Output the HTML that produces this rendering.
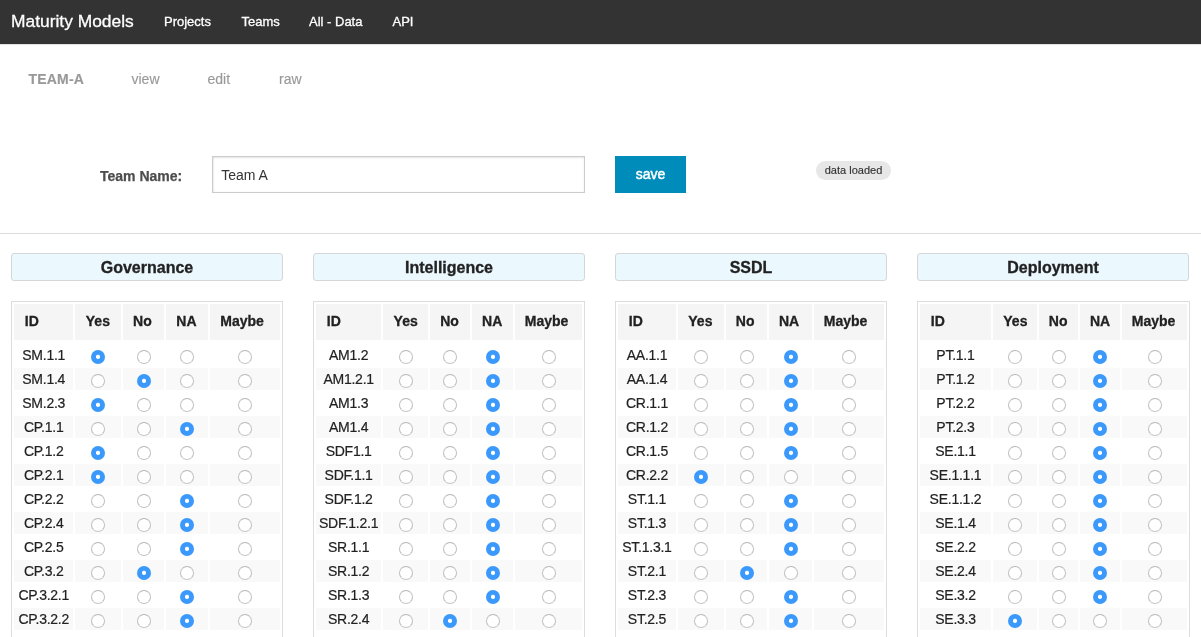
<!DOCTYPE html><html><head><meta charset="utf-8"><title>Maturity Models</title><style>
*{margin:0;padding:0;box-sizing:border-box}
html,body{width:1201px;height:637px;overflow:hidden;background:#fff}
body{font-family:"Liberation Sans",sans-serif;color:#222;position:relative;font-kerning:normal;text-rendering:optimizeLegibility}
.abs{position:absolute;white-space:nowrap}
.nav{position:absolute;left:0;top:0;width:1201px;height:44px;background:#333;box-shadow:0 1px 0 #e2e2e2,0 2px 0 #fcfcfc}
.brand{left:11px;top:6px;font-size:17.4px;line-height:30px;color:#fff;-webkit-text-stroke:0.3px #fff}
.nl{top:10px;font-size:13px;line-height:24px;color:#fff;-webkit-text-stroke:0.3px #fff}
.sub{top:68.5px;font-size:14px;line-height:20px;color:#999;-webkit-text-stroke:0.15px #999}
.lbl{left:100px;top:166px;font-size:14px;line-height:20px;font-weight:bold;color:#4d4d4d;-webkit-text-stroke:0.25px #4d4d4d}
.inp{left:212.3px;top:156px;width:372.4px;height:37px;border:1px solid #ccc;box-shadow:inset 0 1px 2px rgba(0,0,0,.1),inset 1px 0 2px rgba(0,0,0,.06)}
.inpt{left:221.2px;top:165px;font-size:14px;line-height:20px;color:#333}
.btn{left:615px;top:156px;width:71px;height:37px;background:#008cba;color:#fff;font-size:14px;font-weight:normal;-webkit-text-stroke:0.45px #fff;text-align:center;line-height:36px}
.badge{left:816px;top:161px;width:75px;height:19px;border-radius:10px;background:#e7e7e7;color:#333;font-size:11px;line-height:19px;text-align:center;-webkit-text-stroke:0.15px #333}
.hr{left:0;top:233px;width:1201px;height:1px;background:#ddd}
.panel{border:1px solid #d6d6d6;border-radius:3px;background:#ebf8fe;font-size:16px;font-weight:bold;text-align:center;color:#222;-webkit-text-stroke:0.3px #222}
.tbl{border:1px solid #ddd;background:#fff;height:400px}
.th{background:#f5f5f5;font-size:14px;font-weight:bold;color:#222;text-align:center;-webkit-text-stroke:0.3px #222}
.td{font-size:14px;color:#222;text-align:center;-webkit-text-stroke:0.2px #222;letter-spacing:-0.25px;text-indent:0.25px}
.alt{background:#f9f9f9}
.r{position:absolute;width:14px;height:14px;border-radius:50%;border:1px solid;border-color:#b6b6b6 #bfbfbf #c6c6c6;background:#fff}
.r.c{border:none;background:radial-gradient(circle at 7px 6.8px,#fff 0,#fff 1.7px,#3b99fc 2.5px)}
</style></head><body>
<div id="w" style="position:absolute;left:0;top:0;width:1201px;height:637px;will-change:transform">
<div class="nav"></div>
<div class="abs brand">Maturity Models</div>
<div class="abs nl" style="left:164px">Projects</div>
<div class="abs nl" style="left:241.5px">Teams</div>
<div class="abs nl" style="left:309px">All - Data</div>
<div class="abs nl" style="left:392.5px">API</div>
<div class="abs sub" style="left:28.5px;font-weight:bold;letter-spacing:0.2px">TEAM-A</div>
<div class="abs sub" style="left:131.5px">view</div>
<div class="abs sub" style="left:207.5px">edit</div>
<div class="abs sub" style="left:279px">raw</div>
<div class="abs lbl">Team Name:</div>
<div class="abs inp"></div>
<div class="abs inpt">Team A</div>
<div class="abs btn">save</div>
<div class="abs badge">data loaded</div>
<div class="abs hr"></div>
<div class="abs panel" style="left:11px;top:253.2px;width:272px;height:27.4px;line-height:27.4px">Governance</div>
<div class="abs tbl" style="left:11px;top:301.3px;width:272px"></div>
<div class="abs th" style="left:14px;top:304px;width:59.2px;height:36px;line-height:34px;text-align:left;padding-left:10.8px;">ID</div>
<div class="abs th" style="left:75.2px;top:304px;width:45.8px;height:36px;line-height:34px;text-align:left;padding-left:10.6px;">Yes</div>
<div class="abs th" style="left:123px;top:304px;width:41.2px;height:36px;line-height:34px;text-align:left;padding-left:10.1px;">No</div>
<div class="abs th" style="left:166.2px;top:304px;width:42px;height:36px;line-height:34px;text-align:left;padding-left:10.1px;">NA</div>
<div class="abs th" style="left:210.2px;top:304px;width:69.8px;height:36px;line-height:34px;text-align:left;padding-left:10.1px;">Maybe</div>
<div class="abs td" style="left:14px;top:344px;width:59.2px;height:22px;line-height:22px">SM.1.1</div>
<span class="r c" style="left:91px;top:350px"></span>
<span class="r" style="left:137px;top:350px"></span>
<span class="r" style="left:180px;top:350px"></span>
<span class="r" style="left:238px;top:350px"></span>
<div class="abs td alt" style="left:14px;top:368px;width:59.2px;height:22px;line-height:22px">SM.1.4</div>
<div class="abs alt" style="left:75.2px;top:368px;width:45.8px;height:22px"></div>
<span class="r" style="left:91px;top:374px"></span>
<div class="abs alt" style="left:123px;top:368px;width:41.2px;height:22px"></div>
<span class="r c" style="left:137px;top:374px"></span>
<div class="abs alt" style="left:166.2px;top:368px;width:42px;height:22px"></div>
<span class="r" style="left:180px;top:374px"></span>
<div class="abs alt" style="left:210.2px;top:368px;width:69.8px;height:22px"></div>
<span class="r" style="left:238px;top:374px"></span>
<div class="abs td" style="left:14px;top:392px;width:59.2px;height:22px;line-height:22px">SM.2.3</div>
<span class="r c" style="left:91px;top:398px"></span>
<span class="r" style="left:137px;top:398px"></span>
<span class="r" style="left:180px;top:398px"></span>
<span class="r" style="left:238px;top:398px"></span>
<div class="abs td alt" style="left:14px;top:416px;width:59.2px;height:22px;line-height:22px">CP.1.1</div>
<div class="abs alt" style="left:75.2px;top:416px;width:45.8px;height:22px"></div>
<span class="r" style="left:91px;top:422px"></span>
<div class="abs alt" style="left:123px;top:416px;width:41.2px;height:22px"></div>
<span class="r" style="left:137px;top:422px"></span>
<div class="abs alt" style="left:166.2px;top:416px;width:42px;height:22px"></div>
<span class="r c" style="left:180px;top:422px"></span>
<div class="abs alt" style="left:210.2px;top:416px;width:69.8px;height:22px"></div>
<span class="r" style="left:238px;top:422px"></span>
<div class="abs td" style="left:14px;top:440px;width:59.2px;height:22px;line-height:22px">CP.1.2</div>
<span class="r c" style="left:91px;top:446px"></span>
<span class="r" style="left:137px;top:446px"></span>
<span class="r" style="left:180px;top:446px"></span>
<span class="r" style="left:238px;top:446px"></span>
<div class="abs td alt" style="left:14px;top:464px;width:59.2px;height:22px;line-height:22px">CP.2.1</div>
<div class="abs alt" style="left:75.2px;top:464px;width:45.8px;height:22px"></div>
<span class="r c" style="left:91px;top:470px"></span>
<div class="abs alt" style="left:123px;top:464px;width:41.2px;height:22px"></div>
<span class="r" style="left:137px;top:470px"></span>
<div class="abs alt" style="left:166.2px;top:464px;width:42px;height:22px"></div>
<span class="r" style="left:180px;top:470px"></span>
<div class="abs alt" style="left:210.2px;top:464px;width:69.8px;height:22px"></div>
<span class="r" style="left:238px;top:470px"></span>
<div class="abs td" style="left:14px;top:488px;width:59.2px;height:22px;line-height:22px">CP.2.2</div>
<span class="r" style="left:91px;top:494px"></span>
<span class="r" style="left:137px;top:494px"></span>
<span class="r c" style="left:180px;top:494px"></span>
<span class="r" style="left:238px;top:494px"></span>
<div class="abs td alt" style="left:14px;top:512px;width:59.2px;height:22px;line-height:22px">CP.2.4</div>
<div class="abs alt" style="left:75.2px;top:512px;width:45.8px;height:22px"></div>
<span class="r" style="left:91px;top:518px"></span>
<div class="abs alt" style="left:123px;top:512px;width:41.2px;height:22px"></div>
<span class="r" style="left:137px;top:518px"></span>
<div class="abs alt" style="left:166.2px;top:512px;width:42px;height:22px"></div>
<span class="r c" style="left:180px;top:518px"></span>
<div class="abs alt" style="left:210.2px;top:512px;width:69.8px;height:22px"></div>
<span class="r" style="left:238px;top:518px"></span>
<div class="abs td" style="left:14px;top:536px;width:59.2px;height:22px;line-height:22px">CP.2.5</div>
<span class="r" style="left:91px;top:542px"></span>
<span class="r" style="left:137px;top:542px"></span>
<span class="r c" style="left:180px;top:542px"></span>
<span class="r" style="left:238px;top:542px"></span>
<div class="abs td alt" style="left:14px;top:560px;width:59.2px;height:22px;line-height:22px">CP.3.2</div>
<div class="abs alt" style="left:75.2px;top:560px;width:45.8px;height:22px"></div>
<span class="r" style="left:91px;top:566px"></span>
<div class="abs alt" style="left:123px;top:560px;width:41.2px;height:22px"></div>
<span class="r c" style="left:137px;top:566px"></span>
<div class="abs alt" style="left:166.2px;top:560px;width:42px;height:22px"></div>
<span class="r" style="left:180px;top:566px"></span>
<div class="abs alt" style="left:210.2px;top:560px;width:69.8px;height:22px"></div>
<span class="r" style="left:238px;top:566px"></span>
<div class="abs td" style="left:14px;top:584px;width:59.2px;height:22px;line-height:22px">CP.3.2.1</div>
<span class="r" style="left:91px;top:590px"></span>
<span class="r" style="left:137px;top:590px"></span>
<span class="r c" style="left:180px;top:590px"></span>
<span class="r" style="left:238px;top:590px"></span>
<div class="abs td alt" style="left:14px;top:608px;width:59.2px;height:22px;line-height:22px">CP.3.2.2</div>
<div class="abs alt" style="left:75.2px;top:608px;width:45.8px;height:22px"></div>
<span class="r" style="left:91px;top:614px"></span>
<div class="abs alt" style="left:123px;top:608px;width:41.2px;height:22px"></div>
<span class="r" style="left:137px;top:614px"></span>
<div class="abs alt" style="left:166.2px;top:608px;width:42px;height:22px"></div>
<span class="r c" style="left:180px;top:614px"></span>
<div class="abs alt" style="left:210.2px;top:608px;width:69.8px;height:22px"></div>
<span class="r" style="left:238px;top:614px"></span>
<div class="abs panel" style="left:313px;top:253.2px;width:272px;height:27.4px;line-height:27.4px">Intelligence</div>
<div class="abs tbl" style="left:313px;top:301.3px;width:272px"></div>
<div class="abs th" style="left:316px;top:304px;width:65px;height:36px;line-height:34px;text-align:left;padding-left:10.8px;">ID</div>
<div class="abs th" style="left:383px;top:304px;width:45.1px;height:36px;line-height:34px;text-align:left;padding-left:10.6px;">Yes</div>
<div class="abs th" style="left:430.1px;top:304px;width:39.9px;height:36px;line-height:34px;text-align:left;padding-left:10.1px;">No</div>
<div class="abs th" style="left:472px;top:304px;width:40.7px;height:36px;line-height:34px;text-align:left;padding-left:10.1px;">NA</div>
<div class="abs th" style="left:514.7px;top:304px;width:67.3px;height:36px;line-height:34px;text-align:left;padding-left:10.1px;">Maybe</div>
<div class="abs td" style="left:316px;top:344px;width:65px;height:22px;line-height:22px">AM1.2</div>
<span class="r" style="left:399px;top:350px"></span>
<span class="r" style="left:443px;top:350px"></span>
<span class="r c" style="left:486px;top:350px"></span>
<span class="r" style="left:542px;top:350px"></span>
<div class="abs td alt" style="left:316px;top:368px;width:65px;height:22px;line-height:22px">AM1.2.1</div>
<div class="abs alt" style="left:383px;top:368px;width:45.1px;height:22px"></div>
<span class="r" style="left:399px;top:374px"></span>
<div class="abs alt" style="left:430.1px;top:368px;width:39.9px;height:22px"></div>
<span class="r" style="left:443px;top:374px"></span>
<div class="abs alt" style="left:472px;top:368px;width:40.7px;height:22px"></div>
<span class="r c" style="left:486px;top:374px"></span>
<div class="abs alt" style="left:514.7px;top:368px;width:67.3px;height:22px"></div>
<span class="r" style="left:542px;top:374px"></span>
<div class="abs td" style="left:316px;top:392px;width:65px;height:22px;line-height:22px">AM1.3</div>
<span class="r" style="left:399px;top:398px"></span>
<span class="r" style="left:443px;top:398px"></span>
<span class="r c" style="left:486px;top:398px"></span>
<span class="r" style="left:542px;top:398px"></span>
<div class="abs td alt" style="left:316px;top:416px;width:65px;height:22px;line-height:22px">AM1.4</div>
<div class="abs alt" style="left:383px;top:416px;width:45.1px;height:22px"></div>
<span class="r" style="left:399px;top:422px"></span>
<div class="abs alt" style="left:430.1px;top:416px;width:39.9px;height:22px"></div>
<span class="r" style="left:443px;top:422px"></span>
<div class="abs alt" style="left:472px;top:416px;width:40.7px;height:22px"></div>
<span class="r c" style="left:486px;top:422px"></span>
<div class="abs alt" style="left:514.7px;top:416px;width:67.3px;height:22px"></div>
<span class="r" style="left:542px;top:422px"></span>
<div class="abs td" style="left:316px;top:440px;width:65px;height:22px;line-height:22px">SDF1.1</div>
<span class="r" style="left:399px;top:446px"></span>
<span class="r" style="left:443px;top:446px"></span>
<span class="r c" style="left:486px;top:446px"></span>
<span class="r" style="left:542px;top:446px"></span>
<div class="abs td alt" style="left:316px;top:464px;width:65px;height:22px;line-height:22px">SDF.1.1</div>
<div class="abs alt" style="left:383px;top:464px;width:45.1px;height:22px"></div>
<span class="r" style="left:399px;top:470px"></span>
<div class="abs alt" style="left:430.1px;top:464px;width:39.9px;height:22px"></div>
<span class="r" style="left:443px;top:470px"></span>
<div class="abs alt" style="left:472px;top:464px;width:40.7px;height:22px"></div>
<span class="r c" style="left:486px;top:470px"></span>
<div class="abs alt" style="left:514.7px;top:464px;width:67.3px;height:22px"></div>
<span class="r" style="left:542px;top:470px"></span>
<div class="abs td" style="left:316px;top:488px;width:65px;height:22px;line-height:22px">SDF.1.2</div>
<span class="r" style="left:399px;top:494px"></span>
<span class="r" style="left:443px;top:494px"></span>
<span class="r c" style="left:486px;top:494px"></span>
<span class="r" style="left:542px;top:494px"></span>
<div class="abs td alt" style="left:316px;top:512px;width:65px;height:22px;line-height:22px">SDF.1.2.1</div>
<div class="abs alt" style="left:383px;top:512px;width:45.1px;height:22px"></div>
<span class="r" style="left:399px;top:518px"></span>
<div class="abs alt" style="left:430.1px;top:512px;width:39.9px;height:22px"></div>
<span class="r" style="left:443px;top:518px"></span>
<div class="abs alt" style="left:472px;top:512px;width:40.7px;height:22px"></div>
<span class="r c" style="left:486px;top:518px"></span>
<div class="abs alt" style="left:514.7px;top:512px;width:67.3px;height:22px"></div>
<span class="r" style="left:542px;top:518px"></span>
<div class="abs td" style="left:316px;top:536px;width:65px;height:22px;line-height:22px">SR.1.1</div>
<span class="r" style="left:399px;top:542px"></span>
<span class="r" style="left:443px;top:542px"></span>
<span class="r c" style="left:486px;top:542px"></span>
<span class="r" style="left:542px;top:542px"></span>
<div class="abs td alt" style="left:316px;top:560px;width:65px;height:22px;line-height:22px">SR.1.2</div>
<div class="abs alt" style="left:383px;top:560px;width:45.1px;height:22px"></div>
<span class="r" style="left:399px;top:566px"></span>
<div class="abs alt" style="left:430.1px;top:560px;width:39.9px;height:22px"></div>
<span class="r" style="left:443px;top:566px"></span>
<div class="abs alt" style="left:472px;top:560px;width:40.7px;height:22px"></div>
<span class="r c" style="left:486px;top:566px"></span>
<div class="abs alt" style="left:514.7px;top:560px;width:67.3px;height:22px"></div>
<span class="r" style="left:542px;top:566px"></span>
<div class="abs td" style="left:316px;top:584px;width:65px;height:22px;line-height:22px">SR.1.3</div>
<span class="r" style="left:399px;top:590px"></span>
<span class="r" style="left:443px;top:590px"></span>
<span class="r c" style="left:486px;top:590px"></span>
<span class="r" style="left:542px;top:590px"></span>
<div class="abs td alt" style="left:316px;top:608px;width:65px;height:22px;line-height:22px">SR.2.4</div>
<div class="abs alt" style="left:383px;top:608px;width:45.1px;height:22px"></div>
<span class="r" style="left:399px;top:614px"></span>
<div class="abs alt" style="left:430.1px;top:608px;width:39.9px;height:22px"></div>
<span class="r c" style="left:443px;top:614px"></span>
<div class="abs alt" style="left:472px;top:608px;width:40.7px;height:22px"></div>
<span class="r" style="left:486px;top:614px"></span>
<div class="abs alt" style="left:514.7px;top:608px;width:67.3px;height:22px"></div>
<span class="r" style="left:542px;top:614px"></span>
<div class="abs panel" style="left:615px;top:253.2px;width:272px;height:27.4px;line-height:27.4px">SSDL</div>
<div class="abs tbl" style="left:615px;top:301.3px;width:272px"></div>
<div class="abs th" style="left:618px;top:304px;width:57.7px;height:36px;line-height:34px;text-align:left;padding-left:10.8px;">ID</div>
<div class="abs th" style="left:677.7px;top:304px;width:46px;height:36px;line-height:34px;text-align:left;padding-left:10.6px;">Yes</div>
<div class="abs th" style="left:725.7px;top:304px;width:41.2px;height:36px;line-height:34px;text-align:left;padding-left:10.1px;">No</div>
<div class="abs th" style="left:768.9px;top:304px;width:42.8px;height:36px;line-height:34px;text-align:left;padding-left:10.1px;">NA</div>
<div class="abs th" style="left:813.7px;top:304px;width:70.3px;height:36px;line-height:34px;text-align:left;padding-left:10.1px;">Maybe</div>
<div class="abs td" style="left:618px;top:344px;width:57.7px;height:22px;line-height:22px">AA.1.1</div>
<span class="r" style="left:694px;top:350px"></span>
<span class="r" style="left:740px;top:350px"></span>
<span class="r c" style="left:784px;top:350px"></span>
<span class="r" style="left:842px;top:350px"></span>
<div class="abs td alt" style="left:618px;top:368px;width:57.7px;height:22px;line-height:22px">AA.1.4</div>
<div class="abs alt" style="left:677.7px;top:368px;width:46px;height:22px"></div>
<span class="r" style="left:694px;top:374px"></span>
<div class="abs alt" style="left:725.7px;top:368px;width:41.2px;height:22px"></div>
<span class="r" style="left:740px;top:374px"></span>
<div class="abs alt" style="left:768.9px;top:368px;width:42.8px;height:22px"></div>
<span class="r c" style="left:784px;top:374px"></span>
<div class="abs alt" style="left:813.7px;top:368px;width:70.3px;height:22px"></div>
<span class="r" style="left:842px;top:374px"></span>
<div class="abs td" style="left:618px;top:392px;width:57.7px;height:22px;line-height:22px">CR.1.1</div>
<span class="r" style="left:694px;top:398px"></span>
<span class="r" style="left:740px;top:398px"></span>
<span class="r c" style="left:784px;top:398px"></span>
<span class="r" style="left:842px;top:398px"></span>
<div class="abs td alt" style="left:618px;top:416px;width:57.7px;height:22px;line-height:22px">CR.1.2</div>
<div class="abs alt" style="left:677.7px;top:416px;width:46px;height:22px"></div>
<span class="r" style="left:694px;top:422px"></span>
<div class="abs alt" style="left:725.7px;top:416px;width:41.2px;height:22px"></div>
<span class="r" style="left:740px;top:422px"></span>
<div class="abs alt" style="left:768.9px;top:416px;width:42.8px;height:22px"></div>
<span class="r c" style="left:784px;top:422px"></span>
<div class="abs alt" style="left:813.7px;top:416px;width:70.3px;height:22px"></div>
<span class="r" style="left:842px;top:422px"></span>
<div class="abs td" style="left:618px;top:440px;width:57.7px;height:22px;line-height:22px">CR.1.5</div>
<span class="r" style="left:694px;top:446px"></span>
<span class="r" style="left:740px;top:446px"></span>
<span class="r c" style="left:784px;top:446px"></span>
<span class="r" style="left:842px;top:446px"></span>
<div class="abs td alt" style="left:618px;top:464px;width:57.7px;height:22px;line-height:22px">CR.2.2</div>
<div class="abs alt" style="left:677.7px;top:464px;width:46px;height:22px"></div>
<span class="r c" style="left:694px;top:470px"></span>
<div class="abs alt" style="left:725.7px;top:464px;width:41.2px;height:22px"></div>
<span class="r" style="left:740px;top:470px"></span>
<div class="abs alt" style="left:768.9px;top:464px;width:42.8px;height:22px"></div>
<span class="r" style="left:784px;top:470px"></span>
<div class="abs alt" style="left:813.7px;top:464px;width:70.3px;height:22px"></div>
<span class="r" style="left:842px;top:470px"></span>
<div class="abs td" style="left:618px;top:488px;width:57.7px;height:22px;line-height:22px">ST.1.1</div>
<span class="r" style="left:694px;top:494px"></span>
<span class="r" style="left:740px;top:494px"></span>
<span class="r c" style="left:784px;top:494px"></span>
<span class="r" style="left:842px;top:494px"></span>
<div class="abs td alt" style="left:618px;top:512px;width:57.7px;height:22px;line-height:22px">ST.1.3</div>
<div class="abs alt" style="left:677.7px;top:512px;width:46px;height:22px"></div>
<span class="r" style="left:694px;top:518px"></span>
<div class="abs alt" style="left:725.7px;top:512px;width:41.2px;height:22px"></div>
<span class="r" style="left:740px;top:518px"></span>
<div class="abs alt" style="left:768.9px;top:512px;width:42.8px;height:22px"></div>
<span class="r c" style="left:784px;top:518px"></span>
<div class="abs alt" style="left:813.7px;top:512px;width:70.3px;height:22px"></div>
<span class="r" style="left:842px;top:518px"></span>
<div class="abs td" style="left:618px;top:536px;width:57.7px;height:22px;line-height:22px">ST.1.3.1</div>
<span class="r" style="left:694px;top:542px"></span>
<span class="r" style="left:740px;top:542px"></span>
<span class="r c" style="left:784px;top:542px"></span>
<span class="r" style="left:842px;top:542px"></span>
<div class="abs td alt" style="left:618px;top:560px;width:57.7px;height:22px;line-height:22px">ST.2.1</div>
<div class="abs alt" style="left:677.7px;top:560px;width:46px;height:22px"></div>
<span class="r" style="left:694px;top:566px"></span>
<div class="abs alt" style="left:725.7px;top:560px;width:41.2px;height:22px"></div>
<span class="r c" style="left:740px;top:566px"></span>
<div class="abs alt" style="left:768.9px;top:560px;width:42.8px;height:22px"></div>
<span class="r" style="left:784px;top:566px"></span>
<div class="abs alt" style="left:813.7px;top:560px;width:70.3px;height:22px"></div>
<span class="r" style="left:842px;top:566px"></span>
<div class="abs td" style="left:618px;top:584px;width:57.7px;height:22px;line-height:22px">ST.2.3</div>
<span class="r" style="left:694px;top:590px"></span>
<span class="r" style="left:740px;top:590px"></span>
<span class="r c" style="left:784px;top:590px"></span>
<span class="r" style="left:842px;top:590px"></span>
<div class="abs td alt" style="left:618px;top:608px;width:57.7px;height:22px;line-height:22px">ST.2.5</div>
<div class="abs alt" style="left:677.7px;top:608px;width:46px;height:22px"></div>
<span class="r" style="left:694px;top:614px"></span>
<div class="abs alt" style="left:725.7px;top:608px;width:41.2px;height:22px"></div>
<span class="r" style="left:740px;top:614px"></span>
<div class="abs alt" style="left:768.9px;top:608px;width:42.8px;height:22px"></div>
<span class="r c" style="left:784px;top:614px"></span>
<div class="abs alt" style="left:813.7px;top:608px;width:70.3px;height:22px"></div>
<span class="r" style="left:842px;top:614px"></span>
<div class="abs panel" style="left:917px;top:253.2px;width:272px;height:27.4px;line-height:27.4px">Deployment</div>
<div class="abs tbl" style="left:917px;top:301.3px;width:272.7px"></div>
<div class="abs th" style="left:920px;top:304px;width:70.7px;height:36px;line-height:34px;text-align:left;padding-left:10.8px;">ID</div>
<div class="abs th" style="left:992.7px;top:304px;width:44px;height:36px;line-height:34px;text-align:left;padding-left:10.6px;">Yes</div>
<div class="abs th" style="left:1038.7px;top:304px;width:39.2px;height:36px;line-height:34px;text-align:left;padding-left:10.1px;">No</div>
<div class="abs th" style="left:1079.9px;top:304px;width:39.8px;height:36px;line-height:34px;text-align:left;padding-left:10.1px;">NA</div>
<div class="abs th" style="left:1121.7px;top:304px;width:65px;height:36px;line-height:34px;text-align:left;padding-left:10.1px;">Maybe</div>
<div class="abs td" style="left:920px;top:344px;width:70.7px;height:22px;line-height:22px">PT.1.1</div>
<span class="r" style="left:1008px;top:350px"></span>
<span class="r" style="left:1052px;top:350px"></span>
<span class="r c" style="left:1093px;top:350px"></span>
<span class="r" style="left:1148px;top:350px"></span>
<div class="abs td alt" style="left:920px;top:368px;width:70.7px;height:22px;line-height:22px">PT.1.2</div>
<div class="abs alt" style="left:992.7px;top:368px;width:44px;height:22px"></div>
<span class="r" style="left:1008px;top:374px"></span>
<div class="abs alt" style="left:1038.7px;top:368px;width:39.2px;height:22px"></div>
<span class="r" style="left:1052px;top:374px"></span>
<div class="abs alt" style="left:1079.9px;top:368px;width:39.8px;height:22px"></div>
<span class="r c" style="left:1093px;top:374px"></span>
<div class="abs alt" style="left:1121.7px;top:368px;width:65px;height:22px"></div>
<span class="r" style="left:1148px;top:374px"></span>
<div class="abs td" style="left:920px;top:392px;width:70.7px;height:22px;line-height:22px">PT.2.2</div>
<span class="r" style="left:1008px;top:398px"></span>
<span class="r" style="left:1052px;top:398px"></span>
<span class="r c" style="left:1093px;top:398px"></span>
<span class="r" style="left:1148px;top:398px"></span>
<div class="abs td alt" style="left:920px;top:416px;width:70.7px;height:22px;line-height:22px">PT.2.3</div>
<div class="abs alt" style="left:992.7px;top:416px;width:44px;height:22px"></div>
<span class="r" style="left:1008px;top:422px"></span>
<div class="abs alt" style="left:1038.7px;top:416px;width:39.2px;height:22px"></div>
<span class="r" style="left:1052px;top:422px"></span>
<div class="abs alt" style="left:1079.9px;top:416px;width:39.8px;height:22px"></div>
<span class="r c" style="left:1093px;top:422px"></span>
<div class="abs alt" style="left:1121.7px;top:416px;width:65px;height:22px"></div>
<span class="r" style="left:1148px;top:422px"></span>
<div class="abs td" style="left:920px;top:440px;width:70.7px;height:22px;line-height:22px">SE.1.1</div>
<span class="r" style="left:1008px;top:446px"></span>
<span class="r" style="left:1052px;top:446px"></span>
<span class="r c" style="left:1093px;top:446px"></span>
<span class="r" style="left:1148px;top:446px"></span>
<div class="abs td alt" style="left:920px;top:464px;width:70.7px;height:22px;line-height:22px">SE.1.1.1</div>
<div class="abs alt" style="left:992.7px;top:464px;width:44px;height:22px"></div>
<span class="r" style="left:1008px;top:470px"></span>
<div class="abs alt" style="left:1038.7px;top:464px;width:39.2px;height:22px"></div>
<span class="r" style="left:1052px;top:470px"></span>
<div class="abs alt" style="left:1079.9px;top:464px;width:39.8px;height:22px"></div>
<span class="r c" style="left:1093px;top:470px"></span>
<div class="abs alt" style="left:1121.7px;top:464px;width:65px;height:22px"></div>
<span class="r" style="left:1148px;top:470px"></span>
<div class="abs td" style="left:920px;top:488px;width:70.7px;height:22px;line-height:22px">SE.1.1.2</div>
<span class="r" style="left:1008px;top:494px"></span>
<span class="r" style="left:1052px;top:494px"></span>
<span class="r c" style="left:1093px;top:494px"></span>
<span class="r" style="left:1148px;top:494px"></span>
<div class="abs td alt" style="left:920px;top:512px;width:70.7px;height:22px;line-height:22px">SE.1.4</div>
<div class="abs alt" style="left:992.7px;top:512px;width:44px;height:22px"></div>
<span class="r" style="left:1008px;top:518px"></span>
<div class="abs alt" style="left:1038.7px;top:512px;width:39.2px;height:22px"></div>
<span class="r" style="left:1052px;top:518px"></span>
<div class="abs alt" style="left:1079.9px;top:512px;width:39.8px;height:22px"></div>
<span class="r c" style="left:1093px;top:518px"></span>
<div class="abs alt" style="left:1121.7px;top:512px;width:65px;height:22px"></div>
<span class="r" style="left:1148px;top:518px"></span>
<div class="abs td" style="left:920px;top:536px;width:70.7px;height:22px;line-height:22px">SE.2.2</div>
<span class="r" style="left:1008px;top:542px"></span>
<span class="r" style="left:1052px;top:542px"></span>
<span class="r c" style="left:1093px;top:542px"></span>
<span class="r" style="left:1148px;top:542px"></span>
<div class="abs td alt" style="left:920px;top:560px;width:70.7px;height:22px;line-height:22px">SE.2.4</div>
<div class="abs alt" style="left:992.7px;top:560px;width:44px;height:22px"></div>
<span class="r" style="left:1008px;top:566px"></span>
<div class="abs alt" style="left:1038.7px;top:560px;width:39.2px;height:22px"></div>
<span class="r" style="left:1052px;top:566px"></span>
<div class="abs alt" style="left:1079.9px;top:560px;width:39.8px;height:22px"></div>
<span class="r c" style="left:1093px;top:566px"></span>
<div class="abs alt" style="left:1121.7px;top:560px;width:65px;height:22px"></div>
<span class="r" style="left:1148px;top:566px"></span>
<div class="abs td" style="left:920px;top:584px;width:70.7px;height:22px;line-height:22px">SE.3.2</div>
<span class="r" style="left:1008px;top:590px"></span>
<span class="r" style="left:1052px;top:590px"></span>
<span class="r c" style="left:1093px;top:590px"></span>
<span class="r" style="left:1148px;top:590px"></span>
<div class="abs td alt" style="left:920px;top:608px;width:70.7px;height:22px;line-height:22px">SE.3.3</div>
<div class="abs alt" style="left:992.7px;top:608px;width:44px;height:22px"></div>
<span class="r c" style="left:1008px;top:614px"></span>
<div class="abs alt" style="left:1038.7px;top:608px;width:39.2px;height:22px"></div>
<span class="r" style="left:1052px;top:614px"></span>
<div class="abs alt" style="left:1079.9px;top:608px;width:39.8px;height:22px"></div>
<span class="r" style="left:1093px;top:614px"></span>
<div class="abs alt" style="left:1121.7px;top:608px;width:65px;height:22px"></div>
<span class="r" style="left:1148px;top:614px"></span>
</div></body></html>
